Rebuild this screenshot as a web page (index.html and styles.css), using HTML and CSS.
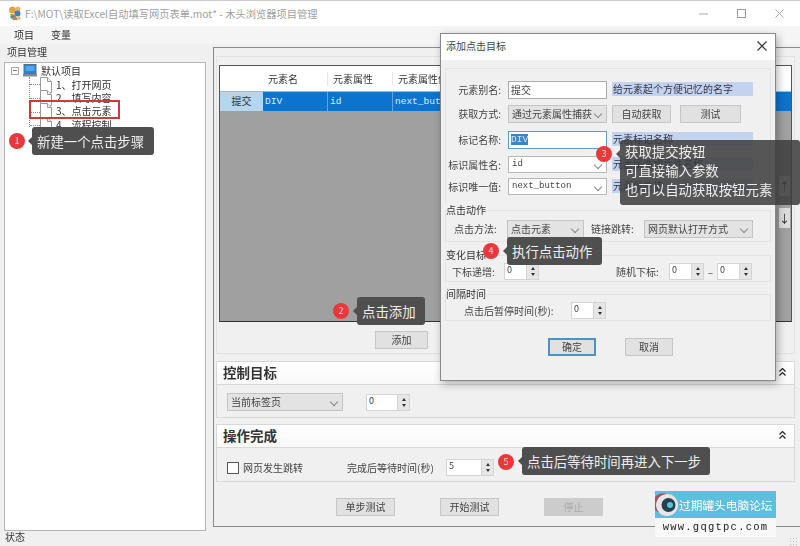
FILE: index.html
```html
<!DOCTYPE html>
<html lang="zh">
<head>
<meta charset="utf-8">
<title>木头浏览器项目管理</title>
<link rel="stylesheet" href="styles.css">
</head>
<body>
<div class="app">
  <header class="titlebar">
    <svg class="app-icon" width="14" height="16" viewBox="0 0 14 16"><circle cx="4.500" cy="5" r="3.500" fill="#e0a347"/><circle cx="10" cy="4" r="2.500" fill="#e7b765"/><circle cx="9.500" cy="8.500" r="3" fill="#3f7fb5"/><path d="M2 9l5 .5 3 5.500-5 0z" fill="#c9852f"/><circle cx="4" cy="12" r="1.800" fill="#4f8fb8"/><circle cx="11" cy="13" r="1.600" fill="#d9b060"/></svg>
    <span class="title-text">F:\MOT\读取Excel自动填写网页表单.mot* - 木头浏览器项目管理</span>
    <div class="win-btns">
      <svg width="10" height="10" viewBox="0 0 10 10"><path d="M0 5h9" stroke="#b5b5b5" stroke-width="1.200"/></svg>
      <svg width="10" height="10" viewBox="0 0 10 10"><rect x=".5" y=".5" width="8" height="8" fill="none" stroke="#999"/></svg>
      <svg width="10" height="10" viewBox="0 0 10 10"><path d="M.5.500l8 8M8.500.500l-8 8" stroke="#aaa"/></svg>
    </div>
  </header>
  <nav class="menu"><span>项目</span><span>变量</span></nav>
  <main class="content">
    <aside class="left">
      <div class="left-label">项目管理</div>
      <div class="tree">
        <div class="tree-root">
          <span class="expander"></span>
          <svg width="14" height="13" viewBox="0 0 14 13"><rect x="1" y="0.500" width="12" height="9" fill="#2f7fd6" stroke="#5c6f86"/><rect x="2.500" y="2" width="9" height="5" fill="#4fa8f0"/><rect x="0" y="10" width="14" height="2.500" fill="#7d8a99"/></svg>
          <span>默认项目</span>
        </div>
        <ul class="tree-kids">
          <li><svg class="doc" width="12" height="16" viewBox="0 0 12 16"><path d="M.5.500h7l4 4v11h-11z" fill="#fff" stroke="#9a9a9a"/><path d="M7.500.500v4h4" fill="#eee" stroke="#9a9a9a"/></svg><span>1、打开网页</span></li>
          <li><svg class="doc" width="12" height="16" viewBox="0 0 12 16"><path d="M.5.500h7l4 4v11h-11z" fill="#fff" stroke="#9a9a9a"/><path d="M7.500.500v4h4" fill="#eee" stroke="#9a9a9a"/></svg><span>2、填写内容</span></li>
          <li><svg class="doc" width="12" height="16" viewBox="0 0 12 16"><path d="M.5.500h7l4 4v11h-11z" fill="#fff" stroke="#9a9a9a"/><path d="M7.500.500v4h4" fill="#eee" stroke="#9a9a9a"/></svg><span>3、点击元素</span></li>
          <li><svg class="doc" width="12" height="16" viewBox="0 0 12 16"><path d="M.5.500h7l4 4v11h-11z" fill="#fff" stroke="#9a9a9a"/><path d="M7.500.500v4h4" fill="#eee" stroke="#9a9a9a"/></svg><span>4、流程控制</span></li>
        </ul>
      </div>
    </aside>
    <section class="right">
      <div class="panel">
        <div class="table">
          <div class="t-row t-head">
            <div class="t-corner"></div><div class="t-cell">元素名</div><div class="t-cell">元素属性</div><div class="t-cell t-wide">元素属性值</div>
          </div>
          <div class="t-row t-sel">
            <div class="t-rowhead">提交</div><div class="t-cell mono">DIV</div><div class="t-cell mono">id</div><div class="t-cell t-wide mono">next_button</div>
          </div>
          <div class="t-body">
            <span class="scroll-btn">↑</span>
            <span class="scroll-btn">↓</span>
          </div>
        </div>
        <div class="add-row"><button class="btn btn-add">添加</button></div>
      </div>
      <div class="section sec-control">
        <div class="sec-head"><span>控制目标</span><svg width="7" height="8" viewBox="0 0 7 8"><path d="M.5 3.500l3-3 3 3M.5 7.500l3-3 3 3" fill="none" stroke="#222" stroke-width="1.200"/></svg></div>
        <div class="sec-body">
          <div class="select sel-tab"><span>当前标签页</span></div>
          <div class="spin spin-tab"><span>0</span><i class="spin-btns"><b></b><b></b></i></div>
        </div>
      </div>
      <div class="section sec-done">
        <div class="sec-head"><span>操作完成</span><svg width="7" height="8" viewBox="0 0 7 8"><path d="M.5 3.500l3-3 3 3M.5 7.500l3-3 3 3" fill="none" stroke="#222" stroke-width="1.200"/></svg></div>
        <div class="sec-body">
          <span class="check"></span><span class="check-label">网页发生跳转</span>
          <span class="wait-label">完成后等待时间(秒)</span>
          <div class="spin spin-wait"><span>5</span><i class="spin-btns"><b></b><b></b></i></div>
        </div>
      </div>
      <div class="actions">
        <button class="btn">单步测试</button>
        <button class="btn">开始测试</button>
        <button class="btn btn-off">停止</button>
      </div>
    </section>
  </main>
  <footer class="status"><span>状态</span><span class="grip"></span></footer>
</div>

<div class="dialog">
  <div class="dlg-title"><span>添加点击目标</span>
    <svg width="10" height="10" viewBox="0 0 10 10"><path d="M.5.500l9 9M9.500.500l-9 9" stroke="#333" stroke-width="1.100"/></svg>
  </div>
  <div class="dlg-body">
    <div class="dlg-form">
      <label>元素别名:</label><div class="input">提交</div><div class="hint">给元素起个方便记忆的名字</div>
      <label>获取方式:</label><div class="select">通过元素属性捕获</div><div class="two-btns"><button class="btn btn-auto">自动获取</button><button class="btn btn-test">测试</button></div>
      <label>标记名称:</label><div class="input input-focus mono"><span class="picked">DIV</span></div><div class="hint">元素标记名称</div>
      <label>标识属性名:</label><div class="select sel-white mono">id</div><div class="hint">元素属性或事件名称</div>
      <label>标识唯一值:</label><div class="select sel-white mono">next_button</div><div class="hint">元素属性值</div>
    </div>
    <fieldset class="fs fs-action">
      <legend>点击动作</legend>
      <label class="lb-method">点击方法:</label><div class="select sel-method">点击元素</div>
      <label class="lb-link">链接跳转:</label><div class="select sel-link">网页默认打开方式</div>
    </fieldset>
    <fieldset class="fs fs-change">
      <legend>变化目标</legend>
      <label class="lb-inc">下标递增:</label><div class="spin spin-s"><span>0</span><i class="spin-btns"><b></b><b></b></i></div>
      <label class="lb-rand">随机下标:</label><div class="spin spin-s"><span>0</span><i class="spin-btns"><b></b><b></b></i></div>
      <span class="dash">–</span>
      <div class="spin spin-s"><span>0</span><i class="spin-btns"><b></b><b></b></i></div>
    </fieldset>
    <fieldset class="fs fs-gap">
      <legend>间隔时间</legend>
      <label class="lb-pause">点击后暂停时间(秒):</label><div class="spin spin-s"><span>0</span><i class="spin-btns"><b></b><b></b></i></div>
    </fieldset>
    <div class="dlg-actions">
      <button class="btn btn-ok">确定</button>
      <button class="btn btn-cancel">取消</button>
    </div>
  </div>
</div>

<div class="mark"></div>
<div class="badge b1">1</div><div class="tip t1">新建一个点击步骤</div>
<div class="badge b2">2</div><div class="tip t2">点击添加</div>
<div class="badge b3">3</div><div class="tip t3">获取提交按钮<br>可直接输入参数<br>也可以自动获取按钮元素</div>
<div class="badge b4">4</div><div class="tip t4">执行点击动作</div>
<div class="badge b5">5</div><div class="tip t5">点击后等待时间再进入下一步</div>

<div class="logo">
  <div class="logo-top">
    <svg width="24" height="24" viewBox="0 0 24 24"><circle cx="12" cy="12" r="11" fill="#e9e4e6"/><path d="M12 1a11 11 0 0 0-8 18.500 9 9 0 0 1 8-18.500z" fill="#a8505f"/><circle cx="13.500" cy="12" r="7" fill="#23414f"/><circle cx="15" cy="12" r="3" fill="#5bc0de"/></svg>
    <span>过期罐头电脑论坛</span>
  </div>
  <div class="logo-url">www.gqgtpc.com</div>
</div>
</body>
</html>
```

FILE: styles.css
```css
* { box-sizing: border-box; }
html, body { margin: 0; height: 100%; }
body {
  width: 800px; height: 546px; overflow: hidden; position: relative;
  background: #f0f0f0; color: #444;
  font: 10px/14px "Noto Sans CJK SC", "Liberation Sans", sans-serif;
  filter: blur(0.35px);
}
button { font: inherit; color: inherit; }
.mono { font-family: "Liberation Mono", "Noto Sans CJK SC", monospace; }

.app { display: flex; flex-direction: column; height: 546px; }

.titlebar { height: 26px; flex: none; background: #fff; display: flex; align-items: center; padding: 0 9px 0 8px; border-top: 1px solid #ccc; }
.app-icon { flex: none; margin-top: -1px; }
.title-text { margin-left: 3px; color: #a0a0a0; font-size: 10.250px; }
.win-btns { margin-left: auto; display: flex; gap: 28px; align-items: center; padding-right: 6px; }

.menu { height: 18px; flex: none; display: flex; gap: 17px; padding: 1px 0 0 14px; background: #f5f5f5; color: #333; line-height: 16px; }

.content { flex: 1; display: flex; min-height: 0; }

.left { width: 213px; flex: none; padding: 1px 0 0 4px; }
.left-label { padding-left: 3px; height: 17px; line-height: 14px; color: #333; }
.tree { width: 202px; height: 469px; background: #fff; border: 1px solid #b5b5b5; padding: 1px 0 0 6px; color: #333; }
.tree-root { display: flex; align-items: center; gap: 4px; height: 13px; }
.expander { width: 8px; height: 8px; border: 1px solid #aaa; position: relative; margin-right: 0; }
.expander::after { content: ""; display: block; margin: 2.500px 1px 0; height: 1px; background: #777; }
.tree-kids { list-style: none; margin: 0 0 0 18px; padding: 0; border-left: 1px dotted #888; height: 50px; }
.tree-kids li { display: flex; align-items: center; height: 13.500px; padding-left: 10px; gap: 4px; position: relative; }
.tree-kids li::before { content: ""; position: absolute; left: 0; top: 7px; width: 10px; border-top: 1px dotted #888; }
.doc { flex: none; margin: 0; }
.tree-kids li:first-child { margin-top: 0; padding-top: 2px; height: 14px; }

.right { flex: 1; margin-top: 3px; height: 480px; border: 1px solid #8a8a8a; border-right: 0; padding: 8px 5px 0 2px; display: flex; flex-direction: column; }
.panel { height: 298px; border: 1px solid #e2e2e2; border-right-color: #e2e2e2; padding: 8px 2px 0; }
.table { height: 257px; background: #a0a0a0; border: 1px solid #555; border-bottom-color: #333; display: flex; flex-direction: column; }
.t-row { display: flex; flex: none; }
.t-head { height: 25px; background: #fff; color: #333; align-items: center; }
.t-corner { width: 43px; }
.t-cell { width: 65px; padding-left: 5px; border-right: 1px solid #e5e5e5; }
.t-wide { width: 120px; padding-left: 5px; white-space: nowrap; overflow: hidden; }
.t-sel { height: 20px; background: #0b74cf; color: #dff1ff; align-items: center; border-top: 1px solid #8cc4ec; }
.t-sel .t-cell { height: 100%; line-height: 19px; padding-left: 2px; font-size: 9.500px; border-right: 1px solid #5aa5e3; }
.t-rowhead { width: 43px; height: 100%; background: #b5d6ef; color: #333; text-align: center; line-height: 18px; }
.t-body { flex: 1; display: flex; flex-direction: column; align-items: flex-end; gap: 12px; padding: 65px 1px 0 0; }
.scroll-btn { width: 11px; height: 20px; background: #dcdcdc; color: #222; text-align: center; line-height: 20px; font-size: 11px; }

.add-row { padding: 9px 0 0 156px; }
.btn { height: 18px; padding: 0; border: 1px solid #c6c6c6; background: #e1e1e1; line-height: 14px; display: block; }
.btn-add { width: 53px; }

.section { margin-top: 7px; border: 1px solid #d8d8d8; background: #f0f0f0; }
.sec-control { height: 57px; }
.sec-done { margin-top: 6px; height: 58px; }
.sec-head { height: 23px; background: linear-gradient(#fff, #f8f8f8); border-bottom: 1px solid #d8d8d8; padding: 0 8px 3px 6px; display: flex; justify-content: space-between; align-items: center; font-size: 13.500px; font-weight: 700; color: #333; }
.sec-body { display: flex; align-items: center; }
.sec-control .sec-body { padding: 8px 0 0 10px; }
.sec-done .sec-body { padding: 6px 0 0 10px; height: 33px; }

.select { height: 18px; border: 1px solid #c4c4c4; background: #e3e3e3; line-height: 15px; padding-left: 3px; position: relative; white-space: nowrap; overflow: hidden; }
.select::after { content: ""; position: absolute; right: 5px; top: 5px; width: 5px; height: 5px; border: solid #888; border-width: 0 1px 1px 0; transform: rotate(45deg); }
.sel-tab { width: 116px; }
.sel-white { background: #fff; border-color: #b8b8b8; font-size: 9px; }

.spin { display: flex; height: 17px; border: 1px solid #d4d4d4; background: #fff; font-size: 9px; line-height: 12px; padding-left: 2px; }
.spin > span { flex: 1; }
.spin-btns { width: 12px; flex: none; display: flex; flex-direction: column; justify-content: center; align-items: center; gap: 3px; background: #e6e6e6; border-left: 1px solid #d4d4d4; }
.spin-btns b { width: 0; height: 0; border: 2.500px solid transparent; border-top: 0; border-bottom: 3px solid #333; }
.spin-btns b + b { border-bottom: 0; border-top: 3px solid #333; }
.spin-tab { width: 44px; margin-left: 23px; }
.spin-wait { width: 48px; margin-left: 8px; }
.spin-s { width: 35px; }

.check { width: 12px; height: 12px; border: 1px solid #555; background: #fff; flex: none; }
.check-label { margin-left: 4px; width: 104px; }
.wait-label { width: 91px; white-space: nowrap; }

.actions { display: flex; gap: 45px; padding: 16px 0 0 120px; }
.actions .btn { width: 59px; }
.btn-off { background: #ccc; color: #aaa; border-color: #ccc; }

.status { height: 16px; flex: none; display: flex; justify-content: space-between; padding: 0 3px 0 5px; line-height: 13px; color: #333; }
.grip { width: 8px; height: 8px; margin-top: 7px; background: radial-gradient(circle, #bbb 1px, transparent 1px) 0 0 / 3px 3px; }

.dialog { position: absolute; left: 440px; top: 33px; width: 336px; height: 348px; background: #f0f0f0; border: 1px solid #888; box-shadow: 2px 3px 8px rgba(0,0,0,.3); }
.dlg-title { height: 26px; background: #fff; display: flex; justify-content: space-between; align-items: center; padding: 0 8px 2px 5px; color: #444; }
.dlg-body { padding: 8px 4px 0; }
.dlg-form { height: 135px; border-top: 1px solid #e3e3e3; border-left: 1px solid #e3e3e3; border-right: 1px solid #e3e3e3; display: grid; grid-template-columns: 56px 99px 1fr; grid-template-rows: 24px 26px 25px 22px 18px; column-gap: 5px; padding: 12px 0 0 1px; align-items: start; margin-bottom: 0; }
.dlg-form label { text-align: right; line-height: 18px; white-space: nowrap; padding-right: 2px; }
.input { height: 18px; border: 1px solid #aaa; background: #fff; line-height: 15px; padding-left: 2px; }
.input-focus { border-color: #5a9ec9; font-size: 9.500px; }
.picked { background: #3a86c8; color: #cfe6f7; }
.dlg-form .select { height: 18px; }
.dlg-form .sel-white { height: 17px; }
.hint { width: 141px; height: 14px; background: #c3d2ee; color: #334; line-height: 13px; padding-left: 1px; margin-top: 1px; }
.two-btns { display: flex; gap: 9px; }
.btn-auto { width: 59px; }
.btn-test { width: 61px; }

.fs { margin: 5px 0 0; padding: 0; border: 1px solid #e3e3e3; display: flex; align-items: center; min-width: 0; }
.fs legend { padding: 0; line-height: 14px; height: 14px; color: #333; }
.fs-action { margin-top: 0; height: 39px; padding-bottom: 1px; }
.fs-change { height: 34px; margin-top: 6px; }
.fs-gap { height: 34px; }
.lb-method { margin-left: 8px; width: 53px; white-space: nowrap; }
.sel-method { width: 77px; }
.lb-link { margin-left: 7px; width: 53px; white-space: nowrap; }
.sel-link { width: 109px; }
.lb-inc { margin-left: 6px; width: 52px; white-space: nowrap; }
.lb-rand { margin-left: 77px; width: 53px; white-space: nowrap; }
.dash { width: 13px; text-align: center; }
.lb-pause { margin-left: 18px; width: 107px; white-space: nowrap; }

.dlg-actions { display: flex; gap: 29px; padding: 17px 0 0 103px; }
.dlg-actions .btn { width: 48px; }
.btn-ok { border: 2px solid #4a93c4; }

.tip { position: absolute; background: #4f4f4f; color: #eee; font-size: 13.400px; line-height: 20px; border-radius: 3px; padding: 4px 5px; white-space: nowrap; }
.tip::before { content: ""; position: absolute; left: -4px; top: 50%; margin-top: -4px; border: 4px solid transparent; border-left: 0; border-right-color: #4f4f4f; }
.t1 { left: 32px; top: 127px; width: 122px; height: 28px; }
.t2 { left: 357px; top: 297px; width: 68px; height: 28px; }
.t3 { left: 620px; top: 140px; width: 180px; height: 65px; background: rgba(60,60,60,.86); padding: 2px 5px; line-height: 19px; }
.t3::before { top: 14px; border-right-color: rgba(60,60,60,.86); }
.t4 { left: 507px; top: 237px; width: 95px; height: 28px; }
.t5 { left: 522px; top: 447px; width: 188px; height: 28px; }

.badge { position: absolute; width: 16px; height: 16px; border-radius: 50%; background: #e8383b; color: #f5d5d5; font-size: 9px; line-height: 16px; text-align: center; }
.b1 { left: 9px; top: 133px; }
.b2 { left: 333px; top: 303px; }
.b3 { left: 596px; top: 146px; }
.b4 { left: 483px; top: 243px; }
.b5 { left: 498px; top: 454px; }

.mark { position: absolute; left: 29px; top: 100px; width: 91px; height: 19px; border: 2px solid #d0393c; }

.logo { position: absolute; left: 655px; top: 491px; width: 121px; height: 46px; }
.logo-top { height: 27px; background: #5bc0de; display: flex; align-items: center; padding-left: 0; color: #fff; font-size: 11.700px; white-space: nowrap; }
.logo-url { height: 19px; background: #f8f8f8; color: #222; font-family: "Liberation Mono", monospace; font-size: 10.500px; letter-spacing: 1.250px; text-align: center; line-height: 18px; }
```
